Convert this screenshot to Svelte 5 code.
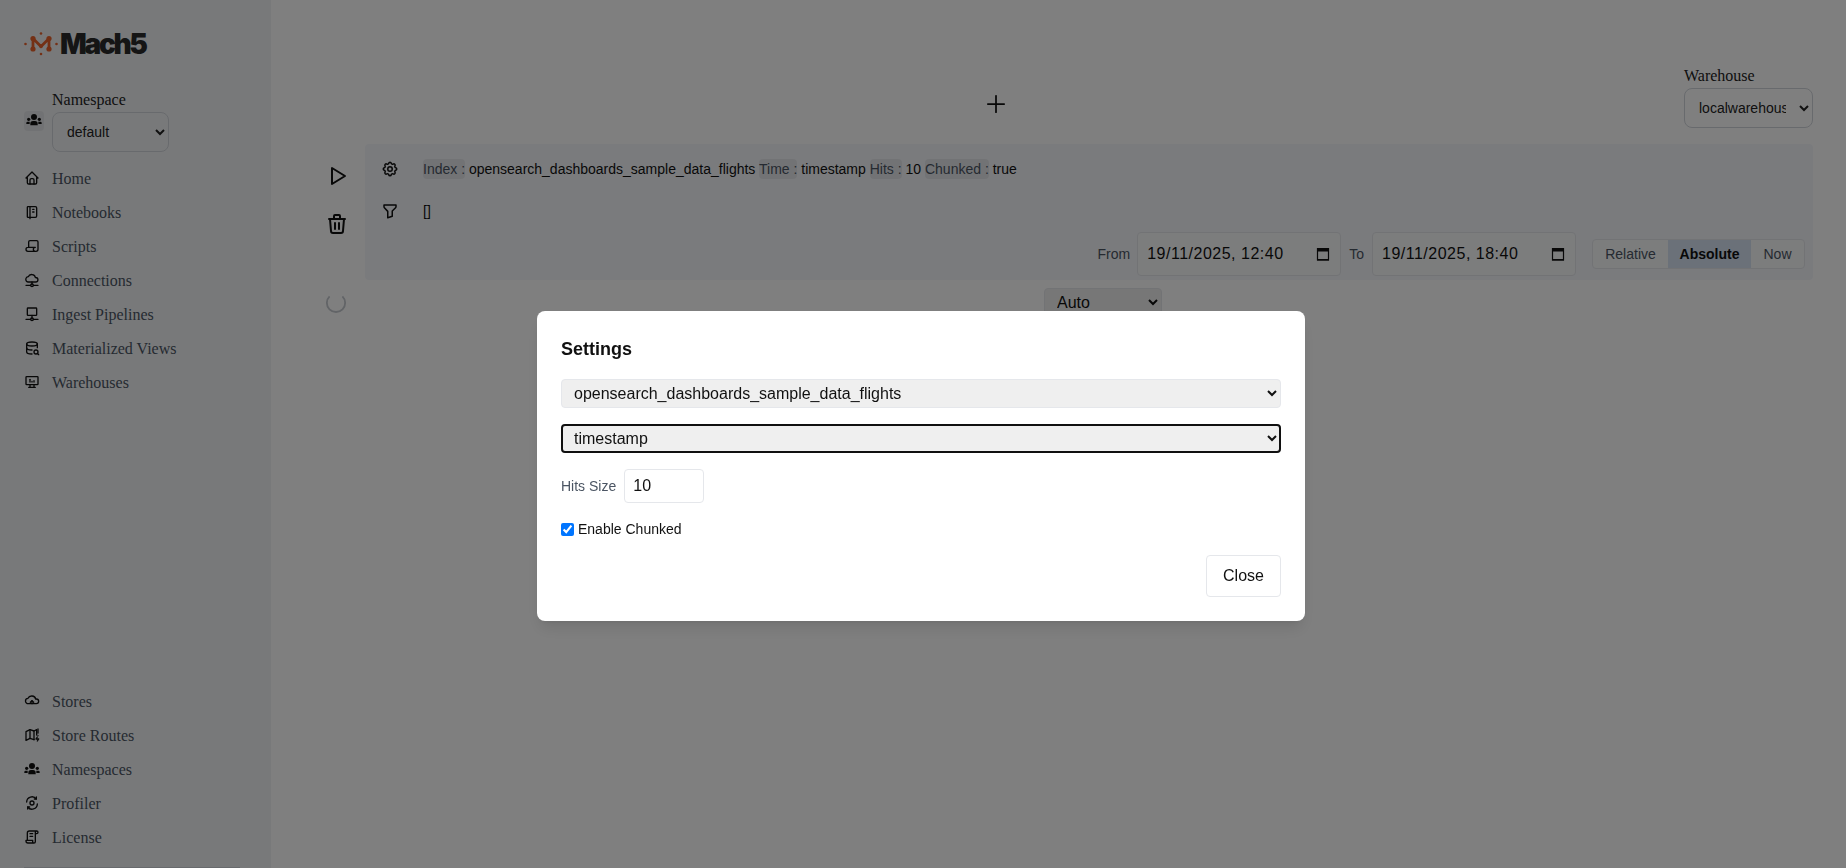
<script>
  const topNav = [
    { label: 'Home', paths: ['M5 12l-2 0l9 -9l9 9l-2 0', 'M5 12v7a2 2 0 0 0 2 2h10a2 2 0 0 0 2 -2v-7', 'M9 21v-6a2 2 0 0 1 2 -2h2a2 2 0 0 1 2 2v6'] },
    { label: 'Notebooks', paths: ['M6 4h11a2 2 0 0 1 2 2v12a2 2 0 0 1 -2 2h-11a1 1 0 0 1 -1 -1v-14a1 1 0 0 1 1 -1m3 0v18', 'M13 8l2 0', 'M13 12l2 0'] },
    { label: 'Scripts', paths: ['M17 20h-11a3 3 0 0 1 0 -6h11a3 3 0 0 0 0 6h1a3 3 0 0 0 3 -3v-11a2 2 0 0 0 -2 -2h-10a2 2 0 0 0 -2 2v8'] },
    { label: 'Connections', paths: ['M3 20h7', 'M14 20h7', 'M10 20a2 2 0 1 0 4 0a2 2 0 0 0 -4 0', 'M12 15v3', 'M7 15a4 4 0 0 1 -.6 -8a5.5 5 0 0 1 10.6 1.2h.5a3.4 3.4 0 0 1 0 6.800h-10.500z'] },
    { label: 'Ingest Pipelines', paths: ['M6 3h12a1 1 0 0 1 1 1v9a1 1 0 0 1 -1 1h-12a1 1 0 0 1 -1 -1v-9a1 1 0 0 1 1 -1z', 'M12 14v4', 'M3 20h7', 'M14 20h7', 'M10 20a2 2 0 1 0 4 0a2 2 0 0 0 -4 0'] },
    { label: 'Materialized Views', paths: ['M4 6c0 1.657 3.582 3 8 3s8 -1.343 8 -3s-3.582 -3 -8 -3s-8 1.343 -8 3', 'M4 6v6c0 1.657 3.582 3 8 3m8 -3.500v-5.500', 'M4 12v6c0 1.657 3.582 3 8 3', 'M15 18a3 3 0 1 0 6 0a3 3 0 0 0 -6 0', 'M20.200 20.200l1.800 1.800'] },
    { label: 'Warehouses', paths: ['M4 4h16a1 1 0 0 1 1 1v10a1 1 0 0 1 -1 1h-16a1 1 0 0 1 -1 -1v-10a1 1 0 0 1 1 -1z', 'M7 20h10', 'M9 16v4', 'M15 16v4', 'M9 12v-4', 'M12 12v-1', 'M15 12v-2'] }
  ];
  const bottomNav = [
    { label: 'Stores', paths: ['M8 16h-1.500a4 4 0 0 1 -.5 -8a6 5.500 0 0 1 11.500 1h1a3.500 3.500 0 0 1 0 7h-2.500z', 'M9.500 14l2.500 -2.500l2.500 2.500', 'M12 11.500v4.500'] },
    { label: 'Store Routes', paths: ['M15 19l-6 -2l-6 3v-13l6 -3l6 2l4 -2v8', 'M9 4v13', 'M15 6v13', 'M21 3v6', 'M21 13v.01', 'M20 15l-2 3h4l-2 3'] }
  ];
  const bottomNav2 = [
    { label: 'Profiler', paths: ['M9 12a3 3 0 1 0 6 0a3 3 0 0 0 -6 0', 'M4 10.500a8 8 0 0 1 14.500 -4.500', 'M20 13.500a8 8 0 0 1 -14.500 4.500', 'M18.500 3v3h-3', 'M5.500 21v-3h3'] },
    { label: 'License', paths: ['M15 21h-9a3 3 0 0 1 -3 -3v-1h10v2a2 2 0 0 0 4 0v-14a2 2 0 1 1 2 2h-2m2 -4h-11a3 3 0 0 0 -3 3v11', 'M9 7l4 0', 'M9 11l4 0'] }
  ];
</script>

{#snippet icon(paths)}
  <svg class="nav-icon" viewBox="0 0 24 24" aria-hidden="true">
    {#each paths as d}<path {d} />{/each}
  </svg>
{/snippet}

{#snippet group(cls)}
  <svg class={cls} viewBox="0 0 24 24" aria-hidden="true">
    <circle class="fill" cx="12" cy="7.500" r="4.500" />
    <path class="fill" d="M6.500 20v-2.500a4 4 0 0 1 4 -4h3a4 4 0 0 1 4 4v2.500z" />
    <circle class="fill" cx="4" cy="11" r="2.400" />
    <circle class="fill" cx="20" cy="11" r="2.400" />
    <path class="fill" d="M.5 18v-1.500a2 2 0 0 1 2 -2h3v3.500z" />
    <path class="fill" d="M23.500 18v-1.500a2 2 0 0 0 -2 -2h-3v3.500z" />
  </svg>
{/snippet}

{#snippet navRow(item)}
  <li class="nav-row">
    {@render icon(item.paths)}
    <span>{item.label}</span>
  </li>
{/snippet}

{#snippet dateField(value)}
  <label class="date">
    <input type="text" {value} />
    <svg class="cal" viewBox="0 0 14 14" aria-hidden="true">
      <path d="M1.500 1.500h11v11.500h-11z" />
      <path class="cal-head" d="M1 1.500h12v3h-12z" />
      <path class="cal-foot" d="M1 12h12v1.500h-12z" />
    </svg>
  </label>
{/snippet}

<div class="page">
  <aside class="sidebar">
    <div>
      <div class="logo">
        <svg class="logo-mark" viewBox="0 0 34 24" aria-hidden="true">
          <path class="m" d="M9 6.500v10M9 6.500l8 8l8 -8M25 6.500v10" />
          <circle class="dot" cx="9" cy="6.500" r="2.600" />
          <circle class="dot" cx="25" cy="6.500" r="2.600" />
          <circle class="dot" cx="9" cy="17" r="2.600" />
          <circle class="dot" cx="25" cy="17" r="2.600" />
          <circle class="dot" cx="17" cy="14" r="2" />
          <circle class="dot" cx="1.500" cy="12" r="1.300" />
          <circle class="dot" cx="32.500" cy="12" r="1.300" />
          <circle class="dot" cx="17" cy="1.500" r="1.300" />
          <circle class="dot" cx="17" cy="22" r="1.300" />
        </svg>
        <span class="logo-text">Mach5</span>
      </div>
      <div class="namespace">
        <div class="ns-icon">{@render group('ns-svg')}</div>
        <label class="field">
          <span>Namespace</span>
          <select class="pill ns-select"><option>default</option></select>
        </label>
      </div>
      <ul class="nav top-nav">
        {#each topNav as item}{@render navRow(item)}{/each}
      </ul>
    </div>
    <div class="sidebar-bottom">
      <ul class="nav">
        {#each bottomNav as item}{@render navRow(item)}{/each}
        <li class="nav-row">{@render group('nav-group')}<span>Namespaces</span></li>
        {#each bottomNav2 as item}{@render navRow(item)}{/each}
      </ul>
      <div class="divider"></div>
    </div>
  </aside>

  <main class="main">
    <div class="top-row">
      <div class="plus-area">
        <svg class="plus" viewBox="0 0 24 24" aria-hidden="true"><path d="M12 5v14" /><path d="M5 12h14" /></svg>
      </div>
      <label class="field">
        <span>Warehouse</span>
        <select class="pill wh-select"><option>localwarehouse</option></select>
      </label>
    </div>

    <div class="query">
      <div class="actions">
        <svg class="action" viewBox="0 0 24 24" aria-hidden="true"><path d="M7 4v16l13 -8z" /></svg>
        <svg class="action" viewBox="0 0 24 24" aria-hidden="true">
          <path d="M4 7l16 0" /><path d="M10 11l0 6" /><path d="M14 11l0 6" />
          <path d="M5 7l1 12a2 2 0 0 0 2 2h8a2 2 0 0 0 2 -2l1 -12" />
          <path d="M9 7v-3a1 1 0 0 1 1 -1h4a1 1 0 0 1 1 1v3" />
        </svg>
      </div>
      <section class="panel">
        <div class="panel-row">
          <svg class="panel-icon" viewBox="0 0 24 24" aria-hidden="true">
            <path d="M10.325 4.317c.426 -1.756 2.924 -1.756 3.350 0a1.724 1.724 0 0 0 2.573 1.066c1.543 -.94 3.310 .826 2.370 2.370a1.724 1.724 0 0 0 1.065 2.572c1.756 .426 1.756 2.924 0 3.350a1.724 1.724 0 0 0 -1.066 2.573c.94 1.543 -.826 3.310 -2.370 2.370a1.724 1.724 0 0 0 -2.572 1.065c-.426 1.756 -2.924 1.756 -3.350 0a1.724 1.724 0 0 0 -2.573 -1.066c-1.543 .94 -3.310 -.826 -2.370 -2.370a1.724 1.724 0 0 0 -1.065 -2.572c-1.756 -.426 -1.756 -2.924 0 -3.350a1.724 1.724 0 0 0 1.066 -2.573c-.94 -1.543 .826 -3.310 2.370 -2.370c1 .608 2.296 .07 2.572 -1.065z" />
            <path d="M9 12a3 3 0 1 0 6 0a3 3 0 0 0 -6 0" />
          </svg>
          <p class="summary"><span class="key">Index :</span> opensearch_dashboards_sample_data_flights <span class="key">Time :</span> timestamp <span class="key">Hits :</span> 10 <span class="key">Chunked :</span> true</p>
        </div>
        <div class="panel-row">
          <svg class="panel-icon" viewBox="0 0 24 24" aria-hidden="true">
            <path d="M4 4h16v2.172a2 2 0 0 1 -.586 1.414l-4.414 4.414v7l-6 2v-8.500l-4.480 -4.928a2 2 0 0 1 -.52 -1.345v-2.227z" />
          </svg>
          <p class="summary">[]</p>
        </div>
        <div class="time-row">
          <span class="time-label">From</span>
          {@render dateField('19/11/2025, 12:40')}
          <span class="time-label to">To</span>
          {@render dateField('19/11/2025, 18:40')}
          <div class="toggle">
            <span class="seg rel">Relative</span>
            <span class="seg abs">Absolute</span>
            <span class="seg now">Now</span>
          </div>
        </div>
      </section>
    </div>

    <div class="result-row">
      <svg class="spinner" viewBox="0 0 24 24" aria-hidden="true"><path d="M5 4.700a10 10 0 1 0 14 0" /></svg>
      <select class="auto"><option>Auto</option></select>
    </div>
  </main>
</div>

<div class="overlay">
  <div class="modal">
    <h3>Settings</h3>
    <select class="modal-select"><option>opensearch_dashboards_sample_data_flights</option></select>
    <select class="modal-select focused"><option>timestamp</option></select>
    <div class="hits">
      <span>Hits Size</span>
      <input type="number" value="10" />
    </div>
    <label class="check"><input type="checkbox" checked /><span>Enable Chunked</span></label>
    <div class="modal-foot"><button>Close</button></div>
  </div>
</div>

<style>
  :global(body) { margin: 0; overflow: hidden; background: #fff; font-family: "Liberation Serif", serif; }
  * { box-sizing: border-box; }
  .page { display: flex; height: 868px; overflow: hidden; }

  .sidebar { width: 271px; flex: none; height: 868px; background: #f1f3f5; padding-left: 24px; display: flex; flex-direction: column; justify-content: space-between; overflow: hidden; color: #4b5563; font-size: 16px; }
  .logo { display: flex; align-items: center; height: 28px; margin-top: 30px; }
  .logo-mark { width: 34px; height: 24px; flex: none; }
  .logo-mark .m { fill: none; stroke: #e8622c; stroke-width: 2.800; }
  .logo-mark .dot { fill: #e8622c; }
  .logo-text { margin-left: 2px; font-family: Inter, "Liberation Sans", sans-serif; font-weight: 900; font-size: 28px; letter-spacing: -2.300px; color: #2a2a2a; line-height: 28px; }

  .namespace { display: flex; align-items: center; gap: 8px; margin-top: 32px; height: 62px; }
  .ns-icon { width: 20px; height: 20px; background: #e3e5e8; border-radius: 4px; display: flex; align-items: center; justify-content: center; }
  :global(.ns-svg) { width: 16px; height: 16px; margin-bottom: 3px; }
  :global(.nav-group) { width: 16px; height: 16px; flex: none; margin-bottom: 3px; }
  .fill { fill: #111; }
  .field { display: flex; flex-direction: column; gap: 3px; font-family: "Liberation Serif", serif; font-size: 16px; line-height: 19px; color: #222; }
  .pill { height: 40px; border: 1px solid #d1d5db; border-radius: 8px; background: transparent; font-family: "Liberation Sans", sans-serif; font-size: 14px; color: #222; padding: 0 4px 0 10px; }
  .ns-select { width: 117px; }
  .wh-select { width: 129px; padding-right: 10px; }

  .nav { list-style: none; margin: 9px 0 0; padding: 0; }
  .top-nav { margin-top: 10px; }
  .nav-row { display: flex; align-items: center; gap: 12px; height: 34px; }
  .nav-icon { width: 16px; height: 16px; flex: none; fill: none; stroke: #111; stroke-width: 2; stroke-linecap: round; stroke-linejoin: round; margin-bottom: 3px; }
  .sidebar-bottom { margin-bottom: 0; }
  .divider { height: 1px; width: 216px; background: #d1d5db; margin-top: 12px; }

  .main { flex: 1; min-width: 0; padding: 66px 33px 0 54px; }
  .top-row { display: flex; gap: 17px; height: 62px; }
  .plus-area { flex: 1; display: flex; align-items: flex-end; justify-content: center; padding-bottom: 10px; }
  .plus { width: 28px; height: 28px; fill: none; stroke: #111; stroke-width: 1.500; stroke-linecap: round; }

  .query { display: flex; gap: 16px; margin-top: 16px; }
  .actions { width: 24px; flex: none; display: flex; flex-direction: column; gap: 24px; padding-top: 20px; }
  .action { width: 24px; height: 24px; fill: none; stroke: #111; stroke-width: 2; stroke-linecap: round; stroke-linejoin: round; }
  .panel { flex: 1; height: 136px; background: #f5f7fb; border-radius: 4px; padding: 12px 8px 0 16px; }
  .panel-row { display: flex; gap: 24px; height: 24px; align-items: center; margin-bottom: 18px; }
  .panel-row:nth-child(2) { margin-bottom: 10px; }
  .panel-icon { width: 18px; height: 18px; margin-top: 2px; flex: none; fill: none; stroke: #111; stroke-width: 2; stroke-linecap: round; stroke-linejoin: round; }
  .summary { margin: 1px 0 0; font-family: "Liberation Sans", sans-serif; font-size: 14px; line-height: 20px; color: #111; }
  .key { background: #e5e7eb; color: #4b5563; border-radius: 4px; padding: 2px 0; }
  .time-row { display: flex; align-items: center; justify-content: flex-end; font-family: "Liberation Sans", sans-serif; font-size: 14px; color: #4b5563; }
  .time-label { margin-right: 7px; }
  .time-label.to { margin-right: 8px; }
  .date { display: flex; align-items: center; width: 204px; height: 44px; border: 1px solid #e5e7eb; border-radius: 4px; background: #f9fafb; padding: 0 10px 0 9px; margin-right: 8px; }
  .date input { flex: 1; min-width: 0; border: 0; padding: 0; background: transparent; font-family: "Liberation Sans", sans-serif; font-size: 16px; letter-spacing: .5px; color: #111; outline: none; }
  .cal { width: 14px; height: 14px; flex: none; fill: none; stroke: #111; stroke-width: 1.200; }
  .cal-head { fill: #111; stroke: none; }
  .cal-foot { fill: #111; stroke: none; }
  .toggle { display: flex; height: 30px; margin-left: 8px; border: 1px solid #e5e7eb; border-radius: 4px; background: #f9fafb; overflow: hidden; }
  .seg { display: flex; align-items: center; justify-content: center; }
  .rel { width: 75px; }
  .abs { width: 83px; background: #d6e2f2; color: #111; font-weight: 700; }
  .now { width: 53px; }

  .result-row { display: flex; align-items: flex-start; margin-top: 8px; }
  .spinner { width: 22px; height: 22px; margin-top: 4px; flex: none; fill: none; stroke: #c4c8ce; stroke-width: 2; }
  .auto { width: 118px; height: 28px; margin-left: 697px; border: 1px solid #e5e7eb; border-radius: 4px; background: #efefef; font-family: "Liberation Sans", sans-serif; font-size: 16px; color: #111; padding: 0 8px; }

  .overlay { position: fixed; inset: 0; background: rgba(0, 0, 0, 0.5); display: flex; justify-content: center; align-items: flex-start; padding: 311px 4px 0 0; font-family: "Liberation Sans", sans-serif; }
  .modal { width: 768px; height: 310px; background: #fff; border-radius: 8px; padding: 24px; box-shadow: 0 10px 15px -3px rgba(0, 0, 0, 0.1), 0 4px 6px -4px rgba(0, 0, 0, 0.1); display: flex; flex-direction: column; }
  h3 { margin: 0 0 16px; font-size: 18px; line-height: 28px; font-weight: 700; color: #111; height: 28px; }
  .modal-select { display: block; width: 100%; height: 29px; flex: none; background: #efefef; border: 1px solid #e5e7eb; border-radius: 4px; font-family: "Liberation Sans", sans-serif; font-size: 16px; color: #111; padding: 0 8px; margin-bottom: 16px; }
  .focused { outline: 2px solid #101010; outline-offset: -2px; }
  .hits { display: flex; align-items: center; gap: 8px; font-size: 14px; color: #4b5563; height: 34px; }
  .hits input { width: 80px; height: 34px; border: 1px solid #e5e7eb; border-radius: 4px; font-family: "Liberation Sans", sans-serif; font-size: 16px; color: #111; padding: 0 8px; background: #fff; }
  .check { display: flex; align-items: center; gap: 4px; margin-top: 18px; font-size: 14px; color: #111; height: 16px; }
  .check input { width: 13px; height: 13px; margin: 0; accent-color: #0075ff; }
  .modal-foot { display: flex; justify-content: flex-end; margin-top: 18px; }
  button { width: 75px; height: 42px; background: #fff; border: 1px solid #e5e7eb; border-radius: 4px; font-family: "Liberation Sans", sans-serif; font-size: 16px; color: #111; }
</style>
